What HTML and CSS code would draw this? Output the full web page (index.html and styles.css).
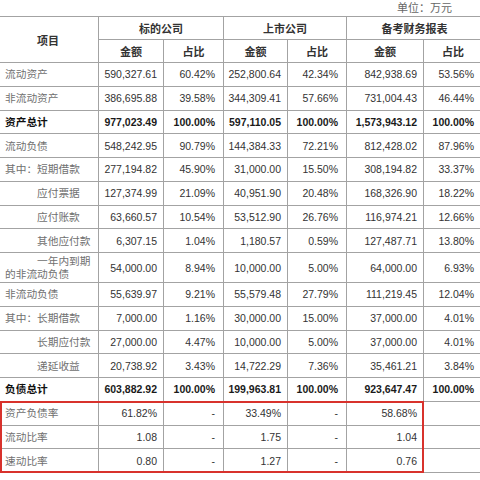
FILE: index.html
```html
<!DOCTYPE html>
<html lang="zh-CN">
<head>
<meta charset="utf-8">
<link rel="stylesheet" href="styles.css">
</head>
<body>
<div class="page">
  <div class="unit">单位：万元</div>
  <table class="fin">
    <colgroup>
      <col class="c-item"><col class="c-amt"><col class="c-pct"><col class="c-amt2"><col class="c-pct2"><col class="c-amt3"><col class="c-pct3">
    </colgroup>
    <thead>
      <tr class="hrow">
        <th rowspan="2" class="hitem">项目</th>
        <th colspan="2">标的公司</th>
        <th colspan="2">上市公司</th>
        <th colspan="2">备考财务报表</th>
      </tr>
      <tr class="hrow">
        <th>金额</th><th>占比</th><th>金额</th><th>占比</th><th>金额</th><th>占比</th>
      </tr>
    </thead>
    <tbody>
      <tr><td class="lbl">流动资产</td><td class="n">590,327.61</td><td class="p">60.42%</td><td class="n">252,800.64</td><td class="p">42.34%</td><td class="n">842,938.69</td><td class="p">53.56%</td></tr>
      <tr><td class="lbl">非流动资产</td><td class="n">386,695.88</td><td class="p">39.58%</td><td class="n">344,309.41</td><td class="p">57.66%</td><td class="n">731,004.43</td><td class="p">46.44%</td></tr>
      <tr class="total"><td class="lbl">资产总计</td><td class="n">977,023.49</td><td class="p">100.00%</td><td class="n">597,110.05</td><td class="p">100.00%</td><td class="n">1,573,943.12</td><td class="p">100.00%</td></tr>
      <tr><td class="lbl">流动负债</td><td class="n">548,242.95</td><td class="p">90.79%</td><td class="n">144,384.33</td><td class="p">72.21%</td><td class="n">812,428.02</td><td class="p">87.96%</td></tr>
      <tr><td class="lbl">其中：短期借款</td><td class="n">277,194.82</td><td class="p">45.90%</td><td class="n">31,000.00</td><td class="p">15.50%</td><td class="n">308,194.82</td><td class="p">33.37%</td></tr>
      <tr><td class="lbl ind">应付票据</td><td class="n">127,374.99</td><td class="p">21.09%</td><td class="n">40,951.90</td><td class="p">20.48%</td><td class="n">168,326.90</td><td class="p">18.22%</td></tr>
      <tr><td class="lbl ind">应付账款</td><td class="n">63,660.57</td><td class="p">10.54%</td><td class="n">53,512.90</td><td class="p">26.76%</td><td class="n">116,974.21</td><td class="p">12.66%</td></tr>
      <tr><td class="lbl ind">其他应付款</td><td class="n">6,307.15</td><td class="p">1.04%</td><td class="n">1,180.57</td><td class="p">0.59%</td><td class="n">127,487.71</td><td class="p">13.80%</td></tr>
      <tr class="dbl"><td class="lbl ind wrap">一年内到期<br>的非流动负债</td><td class="n">54,000.00</td><td class="p">8.94%</td><td class="n">10,000.00</td><td class="p">5.00%</td><td class="n">64,000.00</td><td class="p">6.93%</td></tr>
      <tr><td class="lbl">非流动负债</td><td class="n">55,639.97</td><td class="p">9.21%</td><td class="n">55,579.48</td><td class="p">27.79%</td><td class="n">111,219.45</td><td class="p">12.04%</td></tr>
      <tr><td class="lbl">其中：长期借款</td><td class="n">7,000.00</td><td class="p">1.16%</td><td class="n">30,000.00</td><td class="p">15.00%</td><td class="n">37,000.00</td><td class="p">4.01%</td></tr>
      <tr><td class="lbl ind">长期应付款</td><td class="n">27,000.00</td><td class="p">4.47%</td><td class="n">10,000.00</td><td class="p">5.00%</td><td class="n">37,000.00</td><td class="p">4.01%</td></tr>
      <tr><td class="lbl ind">递延收益</td><td class="n">20,738.92</td><td class="p">3.43%</td><td class="n">14,722.29</td><td class="p">7.36%</td><td class="n">35,461.21</td><td class="p">3.84%</td></tr>
      <tr class="total"><td class="lbl">负债总计</td><td class="n">603,882.92</td><td class="p">100.00%</td><td class="n">199,963.81</td><td class="p">100.00%</td><td class="n">923,647.47</td><td class="p">100.00%</td></tr>
      <tr><td class="lbl">资产负债率</td><td class="n">61.82%</td><td class="p">-</td><td class="n">33.49%</td><td class="p">-</td><td class="n">58.68%</td><td class="p"></td></tr>
      <tr><td class="lbl">流动比率</td><td class="n">1.08</td><td class="p">-</td><td class="n">1.75</td><td class="p">-</td><td class="n">1.04</td><td class="p"></td></tr>
      <tr><td class="lbl">速动比率</td><td class="n">0.80</td><td class="p">-</td><td class="n">1.27</td><td class="p">-</td><td class="n">0.76</td><td class="p"></td></tr>
    </tbody>
  </table>
  <div class="highlight"></div>
</div>
</body>
</html>
```

FILE: styles.css
```css
html, body {
  margin: 0;
  padding: 0;
  background: #ffffff;
}

.page {
  position: relative;
  width: 480px;
  height: 480px;
  overflow: hidden;
}

.unit {
  height: 16px;
  line-height: 14px;
  text-align: right;
  padding-right: 28px;
  font-family: "Noto Sans CJK SC", sans-serif;
  font-size: 11px;
  color: #666;
}

.fin {
  border-collapse: collapse;
  table-layout: fixed;
  width: 485px;
  margin-left: -3px;
}

.c-item { width: 101px; }
.c-amt { width: 65px; }
.c-pct { width: 60px; }
.c-amt2 { width: 64px; }
.c-pct2 { width: 59px; }
.c-amt3 { width: 77px; }
.c-pct3 { width: 59px; }

.fin th,
.fin td {
  border: 1px solid #a3a3a3;
  padding: 0;
  white-space: nowrap;
  overflow: hidden;
}

.hrow {
  height: 23px;
}

.fin th {
  font-family: "Noto Sans CJK SC", sans-serif;
  font-weight: bold;
  font-size: 11px;
  color: #333;
  text-align: center;
  line-height: 14px;
}

.fin tbody tr {
  height: 23.75px;
}

.fin tbody tr.dbl {
  height: 30px;
}

.lbl {
  font-family: "Noto Sans CJK SC", sans-serif;
  font-size: 10.7px;
  color: #707070;
  padding: 0 6px 0 7px !important;
  text-align: left;
  line-height: 14px;
}

.lbl.ind {
  text-indent: 32px;
}

.lbl.wrap {
  white-space: normal;
  line-height: 12.5px;
}

.n,
.p {
  font-family: "Liberation Sans", Arial, sans-serif;
  font-size: 10.5px;
  color: #333;
  text-align: right;
  line-height: 14px;
}

.n {
  padding-right: 6px !important;
}

.p {
  padding-right: 8px !important;
}

.total td {
  font-weight: bold;
  color: #1a1a1a;
}

.total .lbl {
  color: #111;
}

.highlight {
  position: absolute;
  left: 0;
  top: 401px;
  width: 420px;
  height: 68px;
  border: 2px solid #d8322c;
  pointer-events: none;
}
```
